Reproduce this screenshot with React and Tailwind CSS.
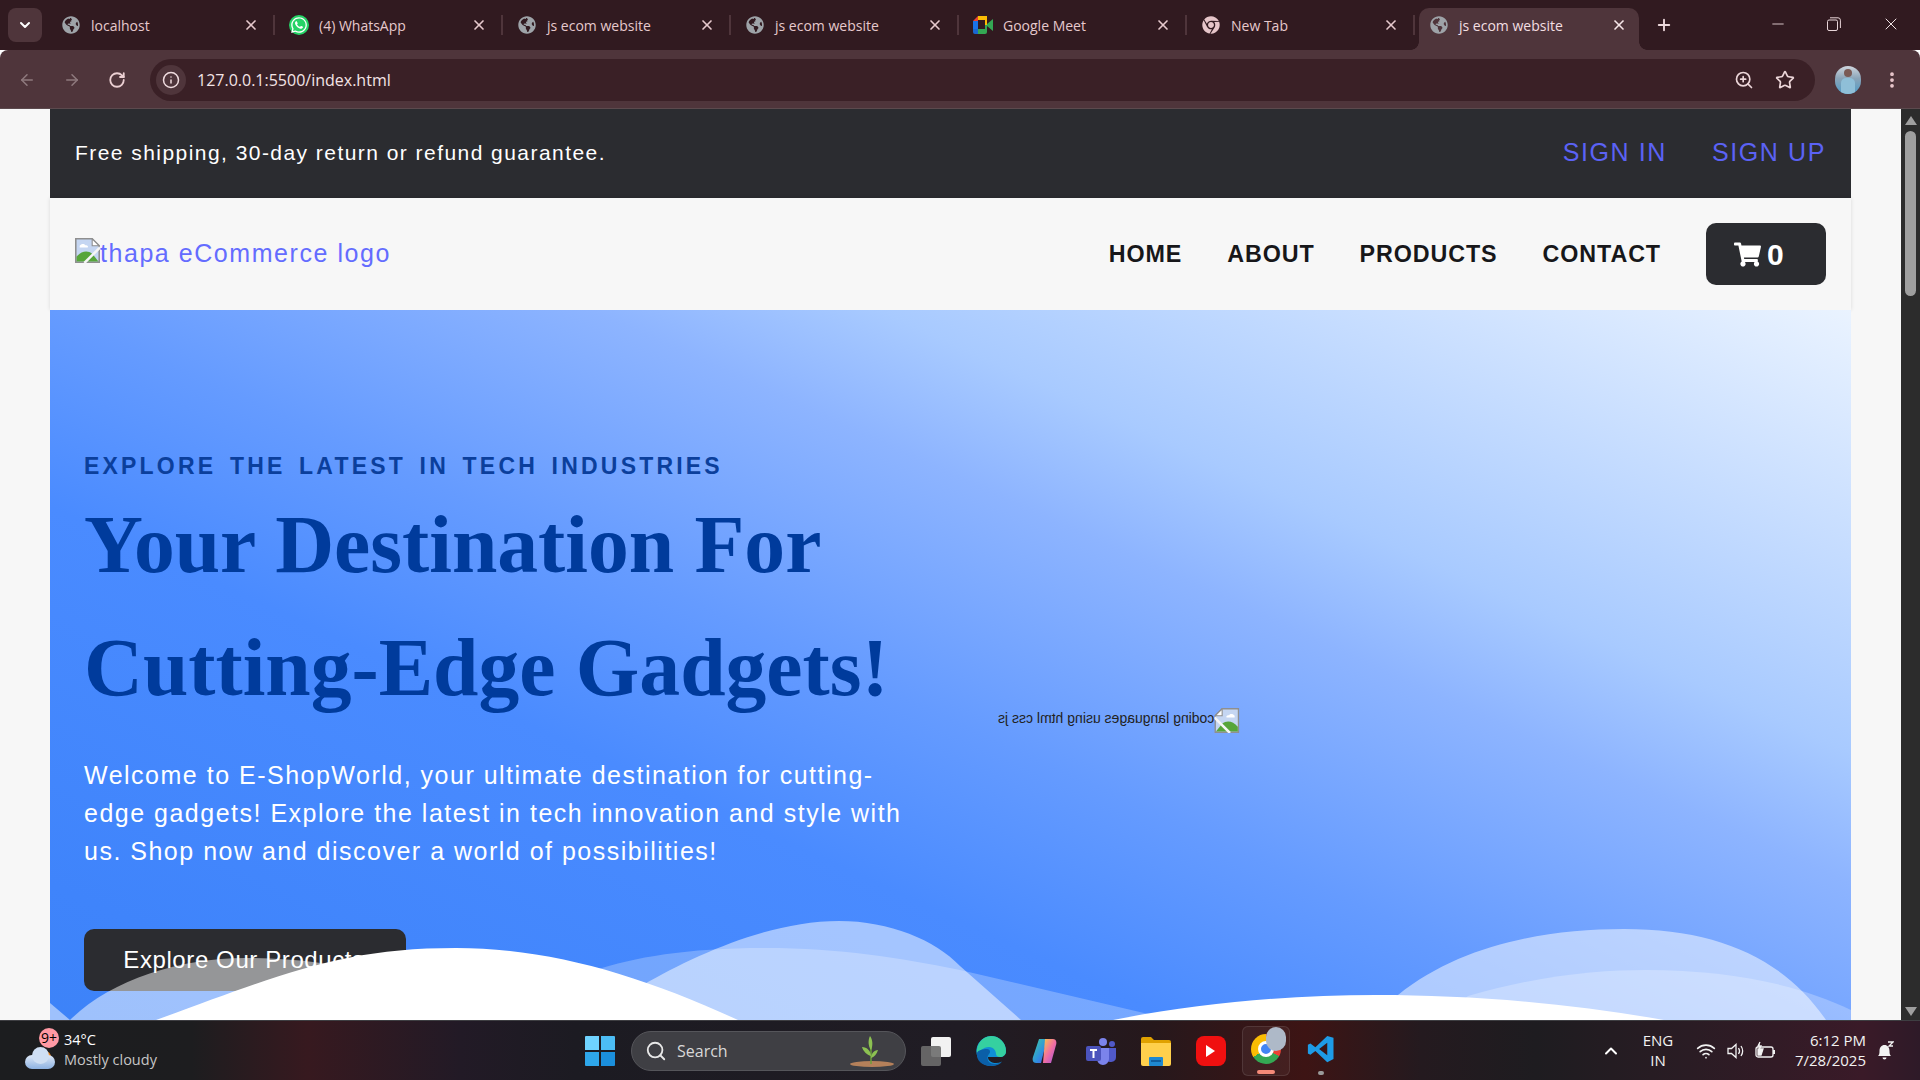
import { ArrowLeft, ArrowRight, RotateCw, Info, ZoomIn, Star, EllipsisVertical, ChevronDown, ChevronUp, Plus, X, Minus, Search, Wifi } from 'lucide-react'
import { FaGlobeAmericas, FaWhatsapp, FaChrome, FaShoppingCart } from 'react-icons/fa'

const tabs = [
  { label: 'localhost', icon: 'globe' },
  { label: '(4) WhatsApp', icon: 'whatsapp' },
  { label: 'js ecom website', icon: 'globe' },
  { label: 'js ecom website', icon: 'globe' },
  { label: 'Google Meet', icon: 'meet' },
  { label: 'New Tab', icon: 'chrome' },
  { label: 'js ecom website', icon: 'globe', active: true },
]

function MeetIcon() {
  return (
    <svg width="20" height="18" viewBox="0 0 20 18">
      <path d="M5 0h9v4H5z" fill="#fbbc04" />
      <path d="M0 5 5 0v5z" fill="#ea4335" />
      <path d="M0 5h5v8H0z" fill="#1a73e8" />
      <path d="M0 13h5v5H2a2 2 0 0 1-2-2z" fill="#1967d2" />
      <path d="M5 13h9v3a2 2 0 0 1-2 2H5z" fill="#34a853" />
      <path d="M12 4h2v5h-2z" fill="#fbbc04" />
      <path d="M12 9h2v4h-2zM14 8l6-5v12l-6-5z" fill="#34a853" />
    </svg>
  )
}

function TabIcon({ type }) {
  if (type === 'whatsapp') {
    return (
      <span className="w-5 h-5 rounded-full bg-[#25d366] flex items-center justify-center">
        <FaWhatsapp className="w-[18px] h-[18px] text-white" />
      </span>
    )
  }
  if (type === 'meet') return <MeetIcon />
  if (type === 'chrome') return <FaChrome className="w-[18px] h-[18px] text-[#e6c5c9]" />
  return <FaGlobeAmericas className="w-[18px] h-[18px] text-[#9ea3a8]" />
}

function Tab({ label, icon, active }) {
  return (
    <div className="relative w-[228px] h-[42px] flex items-center shrink-0">
      {active ? (
        <>
          <div className="absolute left-[4px] right-[4px] top-0 bottom-0 bg-[#4f353b] rounded-t-[10px]" />
          <span className="absolute left-[-4px] bottom-0 w-[8px] h-[8px] bg-[radial-gradient(circle_at_0_0,transparent_7.5px,#4f353b_8px)]" />
          <span className="absolute right-[-4px] bottom-0 w-[8px] h-[8px] bg-[radial-gradient(circle_at_100%_0,transparent_7.5px,#4f353b_8px)]" />
        </>
      ) : (
        <span className="absolute right-0 top-[7px] h-[20px] w-[2px] bg-[#4f353b]" />
      )}
      <div className="relative flex items-center w-full pl-[13px] h-full pb-[8px]">
        <span className="w-[20px] flex justify-center ml-[1px]">
          <TabIcon type={icon} />
        </span>
        <span className={`ml-[10px] w-[152px] text-[14px] ${active ? 'text-[#f3dfe2]' : 'text-[#e6c9cd]'}`}>{label}</span>
        <X className={`w-[16px] h-[16px] ${active ? 'text-[#f7e6e8]' : 'text-[#e6c9cd]'}`} strokeWidth={2.5} />
      </div>
    </div>
  )
}

function RestoreIcon() {
  return (
    <svg width="14" height="14" viewBox="0 0 14 14" fill="none" stroke="#e8d5d8" strokeWidth="1">
      <rect x="0.5" y="3" width="10" height="10.5" rx="1.5" />
      <path d="M3 .8h8a2.4 2.4 0 0 1 2.4 2.4V11" />
    </svg>
  )
}

function BrokenImage({ className }) {
  return (
    <svg className={`shrink-0 ${className || ''}`} width="25" height="25" viewBox="0 0 16 16">
      <path d="M.5.5h10.500l4.500 4.500v10.500H.5z" fill="#c5d6f2" stroke="#8f8f8f" />
      <path d="M11 .5v4.500h4.500z" fill="#fff" stroke="#8f8f8f" strokeWidth=".7" />
      <path d="M3 5c1-1.400 3-1.400 3.600-.3 1.200-.3 2 .5 1.600 1.300H3z" fill="#fff" />
      <path d="M1 15v-3c3-3.600 7-4.200 10-2l4 5z" fill="#57a53a" />
      <path d="M16 6 6 16" stroke="#f6f6f6" strokeWidth="1.600" />
    </svg>
  )
}

function Waves() {
  return (
    <svg className="absolute bottom-0 left-0 w-full h-[110px]" viewBox="50 910 1801 110" preserveAspectRatio="none">
      <path fill="#fff" fillOpacity=".25" d="M500 1020 C545 990 600 948 765 948 C840 948 900 958 960 970 L1144 1013 L1180 1020 Z" />
      <path fill="#fff" fillOpacity=".25" d="M1440 1020 L1468 996 C1540 975 1600 970 1646 970 C1730 970 1800 985 1851 1010 L1851 1020 Z" />
      <path fill="#fff" fillOpacity=".5" d="M50 1003 L70 1020 L50 1020 Z" />
      <path fill="#fff" fillOpacity=".5" d="M70 1020 C110 980 180 958 245 958 C340 958 420 980 500 1020 Z" />
      <path fill="#fff" fillOpacity=".5" d="M560 1020 L643 985 C695 955 770 921 839 921 C890 921 935 940 960 966 L1021 1020 Z" />
      <path fill="#fff" fillOpacity=".5" d="M1340 1020 L1398 995 C1460 945 1545 929 1624 929 C1720 929 1785 960 1826 1020 Z" />
      <path fill="#fff" d="M156 1020 C280 975 340 948 456 948 C550 948 640 975 738 1020 Z" />
      <path fill="#fff" d="M1113 1020 C1200 1003 1290 995 1376 995 C1470 995 1570 1003 1664 1020 Z" />
    </svg>
  )
}

function Browser() {
  return (
    <div className="font-['Open_Sans',sans-serif]">
      <div className="h-[50px] bg-[#311a20] flex items-end">
        <div className="w-[47px] h-[42px] pl-[8px] shrink-0">
          <div className="w-[34px] h-[34px] rounded-lg bg-[#4f353b] flex items-center justify-center">
            <ChevronDown className="w-4 h-4 text-white" strokeWidth={3} />
          </div>
        </div>
        {tabs.map((t, i) => (
          <Tab key={i} {...t} />
        ))}
        <div className="h-[42px] pb-[8px] flex items-center ml-[12px]">
          <Plus className="w-[18px] h-[18px] text-[#ecd8db]" strokeWidth={2.5} />
        </div>
        <div className="ml-auto h-[42px] pb-[10px] flex items-center">
          <Minus className="w-[18px] h-[18px] text-[#e8d5d8]" strokeWidth={1.2} />
          <span className="ml-[40px]"><RestoreIcon /></span>
          <X className="ml-[40px] mr-[19px] w-[20px] h-[20px] text-[#f0e2e4]" strokeWidth={1.2} />
        </div>
      </div>
      <div className="h-[59px] bg-[#4f353b] rounded-t-[8px] border-b border-[#5c4a4e] flex items-center pt-[1px]">
        <div className="w-[150px] flex items-center pl-[18px] gap-[27px] shrink-0">
          <ArrowLeft className="w-[18px] h-[18px] text-[#8f7a7e]" />
          <ArrowRight className="w-[18px] h-[18px] text-[#8f7a7e]" />
          <RotateCw className="w-[18px] h-[18px] text-[#ecd0d3]" strokeWidth={2.4} />
        </div>
        <div className="w-[1665px] h-[42px] bg-[#3a2026] rounded-full flex items-center pl-[6px] pr-[20px] shrink-0">
          <span className="w-[30px] h-[30px] rounded-full bg-[#4f353b] flex items-center justify-center">
            <Info className="w-[18px] h-[18px] text-[#f0dcdf]" />
          </span>
          <span className="ml-[11px] text-[16px] text-[#f3e3e5]">127.0.0.1:5500/index.html</span>
          <ZoomIn className="ml-auto w-[20px] h-[20px] text-[#ecd6d9]" />
          <Star className="ml-[21px] w-[20px] h-[20px] text-[#ecd6d9]" />
        </div>
        <div className="ml-[20px] w-[26px] h-[28px] rounded-full bg-[linear-gradient(180deg,#cfd6de_0%,#8aa4b8_45%,#4f9cc8_100%)] flex flex-col items-center overflow-hidden">
          <span className="mt-[3px] w-[8px] h-[8px] rounded-full bg-[#7a5a55]" />
          <span className="mt-[1px] w-[14px] h-[16px] rounded-t-[5px] bg-[#8fbfd8]" />
        </div>
        <EllipsisVertical className="ml-[21px] w-[20px] h-[20px] text-[#ecc9ce]" strokeWidth={2.5} />
      </div>
    </div>
  )
}

function Page() {
  return (
    <div className="flex-1 flex bg-[#f7f7f7] min-h-0">
      <div className="flex-1 px-[50px] min-w-0 font-['Liberation_Sans',Arial,sans-serif]">
        <div className="h-[89px] pb-[2px] bg-[#2b2c30] flex items-center justify-between pl-[25px] pr-[25px]">
          <p className="text-white text-[21px] tracking-[1.45px]">Free shipping, 30-day return or refund guarantee.</p>
          <div className="flex gap-[45px] text-[#5b62f5] text-[25px] tracking-[1.6px]">
            <a>SIGN IN</a>
            <a>SIGN UP</a>
          </div>
        </div>
        <div className="h-[112px] bg-[#f7f7f7] flex items-center justify-between pl-[25px] pr-[25px] shadow-[0_0_4px_rgba(0,0,0,0.12)]">
          <a className="flex items-center text-[#646cff] text-[25px] tracking-[1.55px]">
            <BrokenImage className="-mt-[8px]" />
            thapa eCommerce logo
          </a>
          <div className="flex items-center gap-[45px]">
            {['HOME', 'ABOUT', 'PRODUCTS', 'CONTACT'].map((n) => (
              <a key={n} className="text-[#17171a] text-[23.3px] font-bold tracking-[0.9px]">{n}</a>
            ))}
            <div className="w-[120px] h-[62px] rounded-[10px] bg-[#2b2c30] flex items-center text-white pl-[28px]">
              <FaShoppingCart className="w-[27px] h-[25px]" />
              <span className="ml-[6px] text-[30px] font-bold">0</span>
            </div>
          </div>
        </div>
        <div className="relative h-[710px] overflow-hidden">
          <div className="h-[820px] grid grid-cols-2 items-center bg-[linear-gradient(to_top_right,#3b82f6_0%,#3f84fb_15%,#4a8bff_38%,#659bff_50%,#8db4ff_65%,#a8caff_73%,#eaf3ff_100%)]">
            <div className="pl-[34px] pr-[40px]">
              <p className="text-[#0b3f9c] text-[23px] font-bold tracking-[3.2px] [word-spacing:4px]">EXPLORE THE LATEST IN TECH INDUSTRIES</p>
              <h1 className="text-[#003b9c] text-[81.6px] leading-[123px] font-bold font-['Liberation_Serif',serif]">
                Your Destination For Cutting-Edge Gadgets!
              </h1>
              <p className="mt-[27px] text-white text-[25px] leading-[38px] tracking-[1.5px]">
                Welcome to E-ShopWorld, your ultimate destination for cutting-edge gadgets! Explore the latest in tech innovation and style with us. Shop now and discover a world of possibilities!
              </p>
              <a className="mt-[59px] w-[322px] h-[62px] rounded-[10px] bg-[#2b2c30] text-white text-[24px] tracking-[0.6px] flex items-center justify-center pr-[2px]">
                Explore Our Products
              </a>
            </div>
            <div className="pl-[47px]">
              <div className="w-fit flex items-center -scale-x-100 text-[#222] text-[14px] whitespace-nowrap">
                <BrokenImage />
                <span className="-mt-[3px]">coding languages using html css js</span>
              </div>
            </div>
          </div>
          <Waves />
        </div>
      </div>
      <div className="w-[19px] bg-[#2c2c2c] flex flex-col items-center shrink-0">
        <span className="mt-[7px] w-0 h-0 border-x-[6px] border-x-transparent border-b-[9px] border-b-[#9f9f9f]" />
        <span className="mt-[6px] w-[11px] h-[165px] rounded-full bg-[#9f9f9f]" />
        <span className="mt-auto mb-[4px] w-0 h-0 border-x-[6px] border-x-transparent border-t-[9px] border-t-[#9f9f9f]" />
      </div>
    </div>
  )
}

function TaskIcon({ children, active }) {
  return (
    <div className={`relative w-[48px] h-[50px] mx-[3.5px] flex items-center justify-center rounded-md ${active ? 'bg-white/5 border border-white/10' : ''}`}>
      {children}
      {active && <span className="absolute bottom-[1px] w-[18px] h-[4px] rounded-full bg-[#f58a78]" />}
    </div>
  )
}

function Taskbar() {
  return (
    <div className="h-[60px] shrink-0 border-t border-[#3e3e42] flex items-center font-['Open_Sans',sans-serif] bg-[linear-gradient(90deg,#1c1d1f_0%,#1d1d1f_10%,#37191f_16%,#221a26_24%,#1c1b22_30%,#201c24_50%,#26181c_60%,#3d1414_68%,#241a1f_74%,#1e1c20_80%,#2a1c24_88%,#3a1a28_97%,#2e1a28_100%)]">
      <div className="w-[585px] flex items-center shrink-0">
        <div className="relative ml-[25px] w-[31px] h-[36px]">
          <div className="absolute left-[14px] top-[18px] w-[12px] h-[12px] rounded-full bg-[#f28a1e]" />
          <div className="absolute bottom-0 left-0 w-[30px] h-[14px] rounded-full bg-[linear-gradient(180deg,#dfe9f7,#8db2e2)]" />
          <div className="absolute bottom-[5px] left-[7px] w-[17px] h-[17px] rounded-full bg-[#cfdff3]" />
          <div className="absolute left-[14px] top-[-5px] w-[20px] h-[20px] rounded-full bg-[#ff99a4] text-[14px] leading-[20px] text-center text-black">9+</div>
        </div>
        <div className="ml-[8px] -mt-[2px] text-[14.500px] leading-[20px]">
          <div className="text-white">34°C</div>
          <div className="text-[#c6c6c6]">Mostly cloudy</div>
        </div>
      </div>
      <svg width="30" height="30" viewBox="0 0 30 30" className="shrink-0">
        <path d="M0 1a1 1 0 0 1 1-1h13v14H0z" fill="#6fd3ff" />
        <path d="M16 0h13a1 1 0 0 1 1 1v13H16z" fill="#4cbdf5" />
        <path d="M0 16h14v14H1a1 1 0 0 1-1-1z" fill="#2ea7ea" />
        <path d="M16 16h14v13a1 1 0 0 1-1 1H16z" fill="#1b8fdc" />
      </svg>
      <div className="ml-[16px] w-[275px] h-[40px] rounded-full bg-[#3f3f44] border border-[#55555a] flex items-center pl-[13px] shrink-0">
        <Search className="w-[22px] h-[22px] text-[#e8e8e8]" />
        <span className="ml-[10px] text-[16px] text-[#d8d8d8]">Search</span>
        <svg width="46" height="34" viewBox="0 0 46 34" className="ml-auto mr-[11px]">
          <ellipse cx="24" cy="30" rx="22" ry="3" fill="#b5805a" />
          <path d="M23 30V8" stroke="#6b9e3a" strokeWidth="1.500" />
          <path d="M23 16C20 12 20 6 22 2c3 4 3 10 1 14zM23 22c-4-1-8-5-9-9 5 0 9 4 9 9zM23 24c3-1 6-4 7-8-4 0-7 4-7 8z" fill="#8cc152" />
        </svg>
      </div>
      <div className="ml-[2px] flex items-center">
        <TaskIcon>
          <svg width="30" height="30" viewBox="0 0 30 30">
            <rect x="10" y="1" width="20" height="20" rx="2" fill="#f2f2f2" />
            <rect x="0" y="10" width="20" height="20" rx="2" fill="#6d6d6d" fillOpacity=".9" />
          </svg>
        </TaskIcon>
        <TaskIcon>
          <svg width="30" height="30" viewBox="0 0 30 30">
            <path d="M15 0a15 15 0 0 1 15 15c0 4-3 6-6 6H12c0 4 4 6 8 6 2 0 4-.5 6-1.500A15 15 0 1 1 15 0z" fill="#0f8fd6" />
            <path d="M15 0a15 15 0 0 1 15 15c0 4-3 6-6 6-2 0-4-1-4-3 0-3-2-7-7-7-6 0-10 5-12 6A15 15 0 0 1 15 0z" fill="#35d0a0" />
            <path d="M1 17c-1 8 6 13 13 13 5 0 9-1 12-4-3 2-10 3-13 0-2-2-2-6 0-8 2-2 1-5-2-5-4 0-9 1-10 4z" fill="#0b5fa8" />
          </svg>
        </TaskIcon>
        <TaskIcon>
          <svg width="28" height="30" viewBox="0 0 28 30">
            <path d="M7 3h8L9 27H4c-3 0-4-3-3-6z" fill="url(#cpa)" />
            <path d="M13 3h8c3 0 4 3 3 6l-5 18h-8z" fill="url(#cpb)" />
            <defs>
              <linearGradient id="cpa" x1="0" y1="0" x2="1" y2="1">
                <stop offset="0" stopColor="#3fd0a0" />
                <stop offset=".6" stopColor="#2f8fe0" />
                <stop offset="1" stopColor="#5b4ce0" />
              </linearGradient>
              <linearGradient id="cpb" x1="0" y1="0" x2="1" y2="1">
                <stop offset="0" stopColor="#f7c948" />
                <stop offset=".5" stopColor="#f26fa0" />
                <stop offset="1" stopColor="#a04fe0" />
              </linearGradient>
            </defs>
          </svg>
        </TaskIcon>
        <TaskIcon>
          <svg width="30" height="28" viewBox="0 0 30 28">
            <circle cx="17" cy="5" r="4" fill="#7b83eb" />
            <circle cx="26" cy="7" r="3" fill="#5059c9" />
            <path d="M21 11h9v9c0 4-3 5-6 5-2 0-3-1-3-1z" fill="#5059c9" />
            <path d="M10 11h13v11a6 6 0 0 1-12 0z" fill="#7b83eb" />
            <rect x="0" y="9" width="15" height="15" rx="2" fill="#4b53bc" />
            <path d="M4 12h7v2H8.500v7h-2v-7H4z" fill="#fff" />
          </svg>
        </TaskIcon>
        <TaskIcon>
          <svg width="30" height="30" viewBox="0 0 30 30">
            <path d="M0 3a2 2 0 0 1 2-2h8l3 3h15a2 2 0 0 1 2 2v4H0z" fill="#e0a100" />
            <path d="M0 7h30v21a2 2 0 0 1-2 2H2a2 2 0 0 1-2-2z" fill="#ffd04c" />
            <rect x="8" y="21" width="14" height="9" rx="1" fill="#1e88d0" />
            <rect x="10" y="24" width="10" height="2" fill="#0f5e9e" />
          </svg>
        </TaskIcon>
        <TaskIcon>
          <div className="w-[30px] h-[30px] rounded-lg bg-[#f01010] flex items-center justify-center">
            <span className="w-0 h-0 border-y-[6px] border-y-transparent border-l-[9px] border-l-white" />
          </div>
        </TaskIcon>
        <TaskIcon active>
          <div className="relative w-[30px] h-[30px] mt-[-4px] rounded-full bg-[conic-gradient(#ea4335_0_33%,#34a853_33%_66%,#fbbc04_66%_100%)] flex items-center justify-center">
            <span className="w-[16px] h-[16px] rounded-full bg-[#4285f4] border-[3px] border-white" />
            <span className="absolute -top-[7px] -right-[5px] w-[20px] h-[24px] rounded-full bg-[#aeb9c8]" />
          </div>
        </TaskIcon>
        <TaskIcon>
          <svg width="30" height="30" viewBox="0 0 24 24" className="-mt-[3px]">
            <path d="M17 1.500 7.500 10.500 3.500 7.500 1.500 8.500v7l2 1 4-3 9.500 9 5-2.500v-17zM17 7v10l-6.500-5z" fill="#1e9be6" />
          </svg>
          <span className="absolute bottom-[1px] w-[6px] h-[4px] rounded-full bg-[#9a9a9a]" />
        </TaskIcon>
      </div>
      <div className="ml-auto flex items-center text-[#f2f2f2] text-[15px]">
        <ChevronUp className="w-[20px] h-[20px] text-white" strokeWidth={2.4} />
        <div className="ml-[12px] -mt-[2px] w-[50px] text-center leading-[20px]">ENG<br />IN</div>
        <Wifi className="ml-[13px] w-[20px] h-[20px]" />
        <svg width="20" height="20" viewBox="0 0 20 20" fill="none" stroke="#f2f2f2" strokeWidth="1.300" className="ml-[10px]">
          <path d="M2 7.500h3.500L10 3.500v13l-4.500-4H2z" />
          <path d="M12.500 7c1.200 1.700 1.200 4.300 0 6M15 5c2 3 2 7 0 10" />
        </svg>
        <svg width="22" height="20" viewBox="0 0 22 20" fill="none" stroke="#f2f2f2" strokeWidth="1.300" className="ml-[9px]">
          <rect x="1" y="6" width="17" height="10" rx="2" />
          <path d="M19 9v4" strokeWidth="2" />
          <path d="M3 8h5l-2 6H3z" fill="#f2f2f2" />
          <path d="M5 1 3 5h3L4 9" fill="#f2f2f2" />
        </svg>
        <div className="ml-[13px] -mt-[2px] w-[76px] text-right leading-[20px] whitespace-nowrap">
          <div>6:12 PM</div>
          <div>7/28/2025</div>
        </div>
        <svg width="18" height="20" viewBox="0 0 18 20" className="ml-[10px] mr-[26px]">
          <path d="M2 15c1-1 1.500-2 1.500-5 0-3.500 2-6 5-6s5 2.500 5 6c0 3 .5 4 1.500 5z" fill="#f2f2f2" />
          <path d="M6.500 16.500h4a2 2 0 0 1-4 0z" fill="#f2f2f2" />
          <path d="M12 1h5l-4 4h4" fill="none" stroke="#f2f2f2" strokeWidth="1.300" />
        </svg>
      </div>
    </div>
  )
}

export default function App() {
  return (
    <div className="w-[1920px] h-[1080px] flex flex-col overflow-hidden">
      <Browser />
      <Page />
      <Taskbar />
    </div>
  )
}
